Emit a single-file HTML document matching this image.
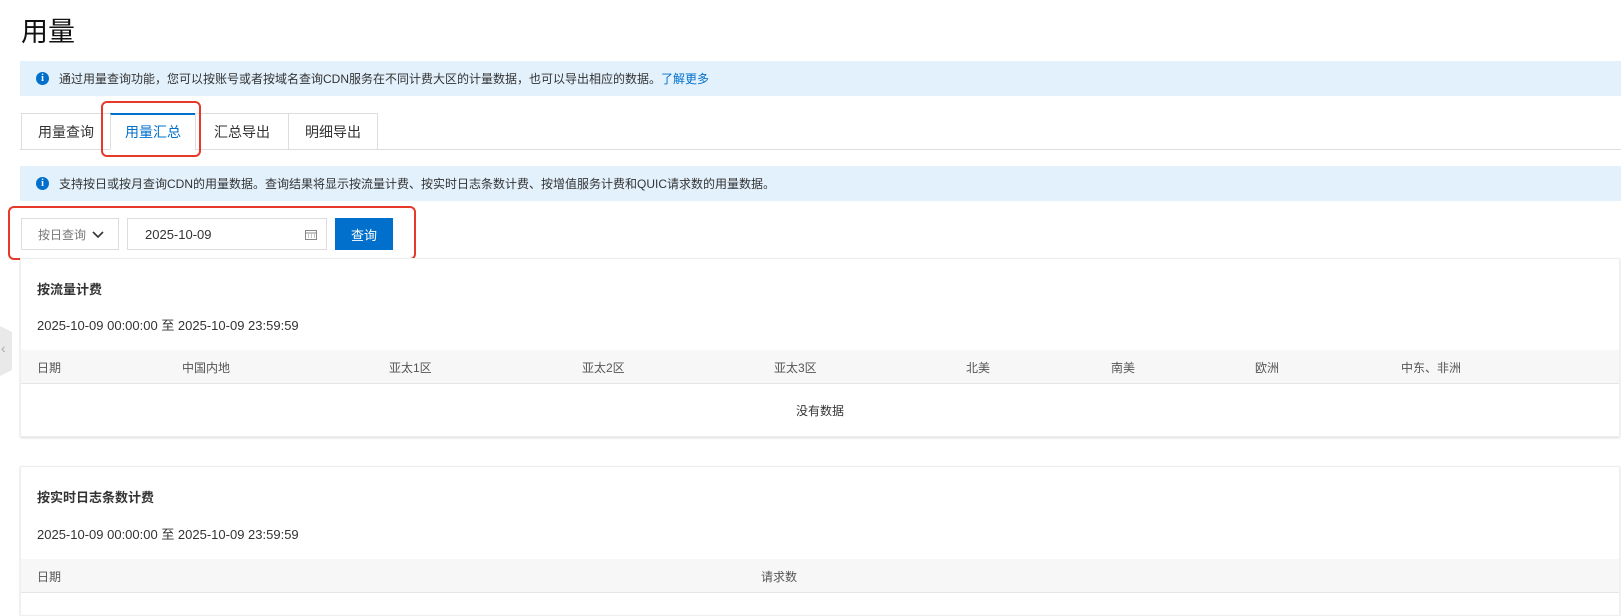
<!DOCTYPE html>
<html><head><meta charset="utf-8"><style>
*{box-sizing:border-box;margin:0;padding:0}
body{width:1621px;height:592px;overflow:hidden;background:#fff;font-family:"Liberation Sans","Noto Sans CJK SC",sans-serif;color:#333;font-size:12px;position:relative}
.a{position:absolute}
.banner{position:absolute;left:20px;right:0;height:35px;background:#e3f1fc;display:flex;align-items:center;padding-left:16px;font-size:12px;color:#333}
.ic{width:13px;height:13px;border-radius:50%;background:#0070cc;color:#fff;font-size:10px;font-weight:bold;display:inline-flex;align-items:center;justify-content:center;margin-right:10px;font-family:"Liberation Serif",serif}
.tab{position:absolute;top:113px;height:37px;border:1px solid #ddd;background:#fff;font-size:14px;color:#333;display:flex;align-items:center;justify-content:center}
.card{position:absolute;left:20px;right:1px;border:1px solid #eee;box-shadow:0 1px 2px rgba(0,0,0,.15);background:#fff}
.card h3{position:absolute;left:16px;font-size:13px;font-weight:bold;color:#333}
.th{position:absolute;left:0;right:0;height:34px;background:#f7f7f7;border-bottom:1px solid #e5e5e5}
.th span{position:absolute;top:9px;font-size:12px;color:#555}
.rng{position:absolute;left:16px;font-size:13px;color:#333}
.red{position:absolute;border:2px solid #e6392a;border-radius:6px}
.box{position:absolute;top:218px;height:32px;border:1px solid #ddd;display:flex;align-items:center}
</style></head><body>
<div class="a" style="left:21px;top:10px;font-size:27px;color:#111">用量</div>
<div class="banner" style="top:61px"><span class="ic">i</span>通过用量查询功能，您可以按账号或者按域名查询CDN服务在不同计费大区的计量数据，也可以导出相应的数据。<span style="color:#0070cc">了解更多</span></div>
<div class="a" style="left:20px;right:0;top:149px;border-top:1px solid #ddd"></div>
<div class="tab" style="left:21px;width:90px">用量查询</div>
<div class="tab" style="left:110px;width:86px;border-top:2px solid #0070cc;border-bottom-color:#fff;color:#0070cc">用量汇总</div>
<div class="tab" style="left:195px;width:94px">汇总导出</div>
<div class="tab" style="left:288px;width:90px">明细导出</div>
<div class="red" style="left:101px;top:101px;width:100px;height:56px"></div>
<div class="banner" style="top:166px"><span class="ic">i</span>支持按日或按月查询CDN的用量数据。查询结果将显示按流量计费、按实时日志条数计费、按增值服务计费和QUIC请求数的用量数据。</div>
<div class="box" style="left:21px;width:98px;font-size:12px;color:#777;padding-left:16px">按日查询<svg width="12" height="8" style="position:absolute;left:70px;top:12px"><path d="M1 1l5 5 5-5" stroke="#333" stroke-width="1.6" fill="none"/></svg></div>
<div class="box" style="left:127px;width:200px;font-size:13px;color:#333;padding-left:17px">2025-10-09
<svg width="12" height="11" style="position:absolute;right:9px;top:10px"><rect x="0.5" y="1.5" width="11" height="9" fill="none" stroke="#888"/><path d="M0 4h12M3 6h1M6 6h1M9 6h1M3 8h1M6 8h1M9 8h1" stroke="#888"/></svg></div>
<div class="a" style="left:335px;top:218px;width:58px;height:32px;background:#0070cc;color:#fff;font-size:13px;display:flex;align-items:center;justify-content:center">查询</div>
<div class="red" style="left:8px;top:206px;width:408px;height:54px"></div>
<div class="a" style="left:0;top:326px;width:12px;height:50px;background:#e9e9e9;clip-path:polygon(0 0,100% 12%,100% 88%,0 100%)"></div>
<div class="a" style="left:1px;top:340px;color:#aaa;font-size:14px">‹</div>
<div class="card" style="top:258px;height:179px">
<h3 style="top:20px">按流量计费</h3>
<div class="rng" style="top:56px">2025-10-09 00:00:00 至 2025-10-09 23:59:59</div>
<div class="th" style="top:91px"><span style="left:16px">日期</span><span style="left:161px">中国内地</span><span style="left:368px">亚太1区</span><span style="left:561px">亚太2区</span><span style="left:753px">亚太3区</span><span style="left:945px">北美</span><span style="left:1090px">南美</span><span style="left:1234px">欧洲</span><span style="left:1380px">中东、非洲</span></div>
<div class="a" style="left:0;right:0;top:143px;text-align:center;font-size:12px;color:#333">没有数据</div>
</div>
<div class="card" style="top:466px;height:150px">
<h3 style="top:20px">按实时日志条数计费</h3>
<div class="rng" style="top:57px">2025-10-09 00:00:00 至 2025-10-09 23:59:59</div>
<div class="th" style="top:92px"><span style="left:16px">日期</span><span style="left:740px">请求数</span></div>
</div>
</body></html>
